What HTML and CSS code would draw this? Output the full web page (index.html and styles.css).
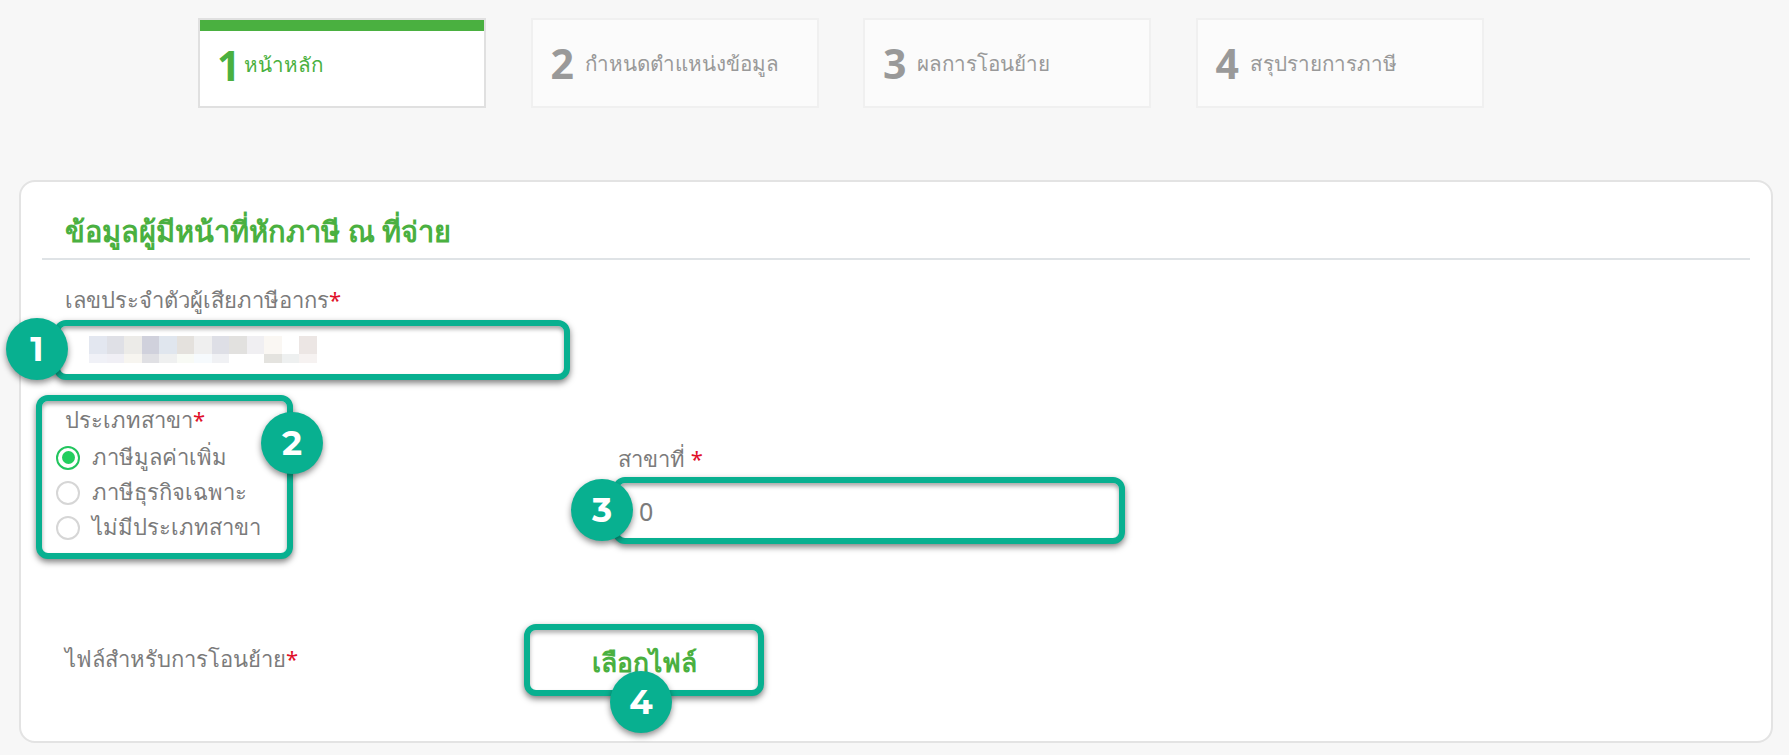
FILE: index.html
```html
<!DOCTYPE html>
<html lang="th">
  <head>
    <meta charset="UTF-8" />
    <title>ข้อมูลผู้มีหน้าที่หักภาษี ณ ที่จ่าย</title>
    <link rel="stylesheet" href="styles.css">
  </head>
  <body>
    <!-- steps on top -->
    <div class="steps">
      <div class="step active"><span class="step-no">1</span><span class="step-name">หน้าหลัก</span></div>
      <div class="step"><span class="step-no">2</span><span class="step-name">กำหนดตำแหน่งข้อมูล</span></div>
      <div class="step"><span class="step-no">3</span><span class="step-name">ผลการโอนย้าย</span></div>
      <div class="step"><span class="step-no">4</span><span class="step-name">สรุปรายการภาษี</span></div>
    </div>
    <!-- the main card -->
    <div class="card">
      <h2 class="card-title">ข้อมูลผู้มีหน้าที่หักภาษี ณ ที่จ่าย</h2>
      <p class="label tax-label">เลขประจำตัวผู้เสียภาษีอากร<span class="req">*</span></p>
      <div class="mark-input tax-input">
        <span class="badge badge-1">1</span>
        <!-- blurred tax number -->
        <svg class="blur" width="228" height="27" viewBox="0 0 13 3" preserveAspectRatio="none" shape-rendering="crispEdges">
          <rect x="0" y="0" width="1" height="2" fill="#e3e7f0" /><rect x="1" y="0" width="1" height="2" fill="#dfe0e6" />
          <rect x="2" y="0" width="1" height="2" fill="#ecebe8" /><rect x="3" y="0" width="1" height="2" fill="#d0d1dc" />
          <rect x="4" y="0" width="1" height="2" fill="#e0e6ee" /><rect x="5" y="0" width="1" height="2" fill="#e4e1dd" />
          <rect x="6" y="0" width="1" height="2" fill="#efefef" /><rect x="7" y="0" width="1" height="2" fill="#dedfe6" />
          <rect x="8" y="0" width="1" height="2" fill="#e2e1df" /><rect x="9" y="0" width="1" height="2" fill="#f0eff2" />
          <rect x="10" y="0" width="1" height="2" fill="#faf7f3" /><rect x="12" y="0" width="1" height="2" fill="#ece6e4" />
          <rect x="0" y="2" width="1" height="1" fill="#f0f1f7" /><rect x="1" y="2" width="1" height="1" fill="#f0eff5" />
          <rect x="2" y="2" width="1" height="1" fill="#f7f5f0" /><rect x="3" y="2" width="1" height="1" fill="#e0e0e4" />
          <rect x="4" y="2" width="1" height="1" fill="#eff0f0" /><rect x="5" y="2" width="1" height="1" fill="#f8faf5" />
          <rect x="6" y="2" width="1" height="1" fill="#f6fafd" /><rect x="7" y="2" width="1" height="1" fill="#f0f1f4" />
          <rect x="10" y="2" width="1" height="1" fill="#e4e3df" /><rect x="11" y="2" width="1" height="1" fill="#eef0f0" />
          <rect x="12" y="2" width="1" height="1" fill="#f6f2f1" />
        </svg>
      </div>
      <div class="branch-row">
        <div class="branch-type">
          <span class="badge badge-2">2</span>
          <p class="label">ประเภทสาขา<span class="req">*</span></p>
          <div class="radio-row"><span class="radio checked"></span>ภาษีมูลค่าเพิ่ม</div>
          <div class="radio-row"><span class="radio"></span>ภาษีธุรกิจเฉพาะ</div>
          <div class="radio-row"><span class="radio"></span>ไม่มีประเภทสาขา</div>
        </div>
        <div class="branch-no">
          <p class="label">สาขาที่ <span class="req">*</span></p>
          <div class="mark-input no-input">
            <span class="badge badge-3">3</span>
            <span class="value">0</span>
          </div>
        </div>
      </div>
      <div class="file-row">
        <p class="label file-label">ไฟล์สำหรับการโอนย้าย<span class="req">*</span></p>
        <div class="file-btn">
          เลือกไฟล์
          <span class="badge badge-4">4</span>
        </div>
      </div>
    </div>
  </body>
</html>
```

FILE: styles.css
```css
/* removing default styling */
* {
  margin: 0;
  padding: 0;
  box-sizing: border-box;
}
body {
  background-color: #f7f7f7;
  font-family: "Noto Sans", "Open Sans", sans-serif;
  color: #7b7b7b;
  width: 1789px;
  height: 755px;
  overflow: hidden;
  padding: 18px 17px 0 19px;
}
/* the steps */
.steps {
  display: flex;
  gap: 44.5px;
  padding-left: 179px;
  height: 90px;
}
.step {
  width: 288px;
  height: 90px;
  background-color: #fbfbfb;
  border: 2px solid #f0f0f0;
  display: flex;
  align-items: center;
  padding-left: 18px;
  color: #999;
}
.step.active {
  background: linear-gradient(#4ab040, #4ab040) top / 100% 11px no-repeat, #fff;
  border-color: #e0e0e0;
  color: #4ab040;
  padding: 11px 0 6px 17px;
}
.step-no {
  font-size: 41px;
  font-weight: 700;
  line-height: 1;
  margin-right: 11px;
}
.active .step-no {
  margin-right: 4px;
}
.step-name {
  font-size: 20.6px;
}
.active .step-name {
  margin-top: -2px;
}
/* the card */
.card {
  margin-top: 72px;
  width: 1754px;
  height: 563px;
  background-color: #fff;
  border: 2px solid #e3e3e3;
  border-radius: 16px;
  padding: 0 21px;
}
.card-title {
  color: #4ab040;
  font-size: 29px;
  font-weight: 600;
  height: 78px;
  line-height: 48px;
  padding: 25px 0 0 23px;
  border-bottom: 2px solid #dfe3e6;
}
.label {
  font-size: 22px;
  line-height: 30px;
}
.req {
  color: #e0102a;
}
.tax-label {
  padding: 24px 0 0 23px;
}
/* teal marks of the guide */
.mark-input {
  position: relative;
  background-color: #fff;
  border: 6px solid #08b090;
  border-radius: 12px;
  box-shadow: 0 3px 6px rgba(0, 0, 0, 0.5), inset 0 3px 4px rgba(0, 0, 0, 0.35);
}
.tax-input {
  margin: 6px 0 0 12px;
  width: 516px;
  height: 60px;
}
.blur {
  display: block;
  position: absolute;
  left: 29px;
  top: 10px;
}
.badge {
  position: absolute;
  z-index: 2;
  width: 62px;
  height: 62px;
  border-radius: 50%;
  background-color: #08b090;
  color: #fff;
  font-family: "Montserrat", "Inter", sans-serif;
  font-size: 34px;
  font-weight: 700;
  line-height: 62px;
  text-align: center;
  box-shadow: 0 3px 6px rgba(0, 0, 0, 0.45);
}
.badge-1 {
  left: -54px;
  top: -8px;
}
.badge-2 {
  right: -36px;
  top: 11px;
}
.badge-3 {
  left: -48px;
  top: -4px;
}
.badge-4 {
  left: 80px;
  top: 41px;
}
/* branch row */
.branch-row {
  display: flex;
  margin-top: 15px;
}
.branch-type {
  position: relative;
  width: 257px;
  height: 164px;
  margin-left: -6px;
  padding: 3px 0 0 23px;
  background-color: #fff;
  border: 6px solid #08b090;
  border-radius: 12px;
  box-shadow: 0 3px 6px rgba(0, 0, 0, 0.5), inset 0 3px 4px rgba(0, 0, 0, 0.35);
  font-size: 22px;
}
.branch-type .label {
  margin-bottom: 6px;
}
.radio-row {
  display: flex;
  align-items: center;
  gap: 12px;
  height: 35px;
  margin-left: -9px;
}
.radio {
  width: 24px;
  height: 24px;
  border: 2px solid #d6d6d6;
  border-radius: 50%;
  background-color: #fff;
  display: flex;
  align-items: center;
  justify-content: center;
}
.radio.checked {
  border-color: #22c55e;
}
.radio.checked::after {
  content: "";
  width: 13px;
  height: 13px;
  border-radius: 50%;
  background-color: #22ce5e;
}
.branch-no {
  margin-left: 320px;
  padding-top: 48px;
}
.branch-no .label {
  padding-left: 5px;
}
.no-input {
  width: 512px;
  height: 67px;
  margin-top: 4px;
  display: flex;
  align-items: center;
}
.value {
  font-size: 25px;
  padding-left: 20px;
}
/* file row */
.file-row {
  display: flex;
  margin-top: 65px;
}
.file-label {
  width: 482px;
  padding: 19px 0 0 23px;
}
.file-btn {
  position: relative;
  width: 240px;
  height: 72px;
  background-color: #fff;
  border: 6px solid #08b090;
  border-radius: 12px;
  box-shadow: 0 3px 6px rgba(0, 0, 0, 0.5), inset 0 3px 4px rgba(0, 0, 0, 0.3);
  color: #4ab040;
  font-size: 26.5px;
  font-weight: 600;
  text-align: center;
  line-height: 64px;
}
```
